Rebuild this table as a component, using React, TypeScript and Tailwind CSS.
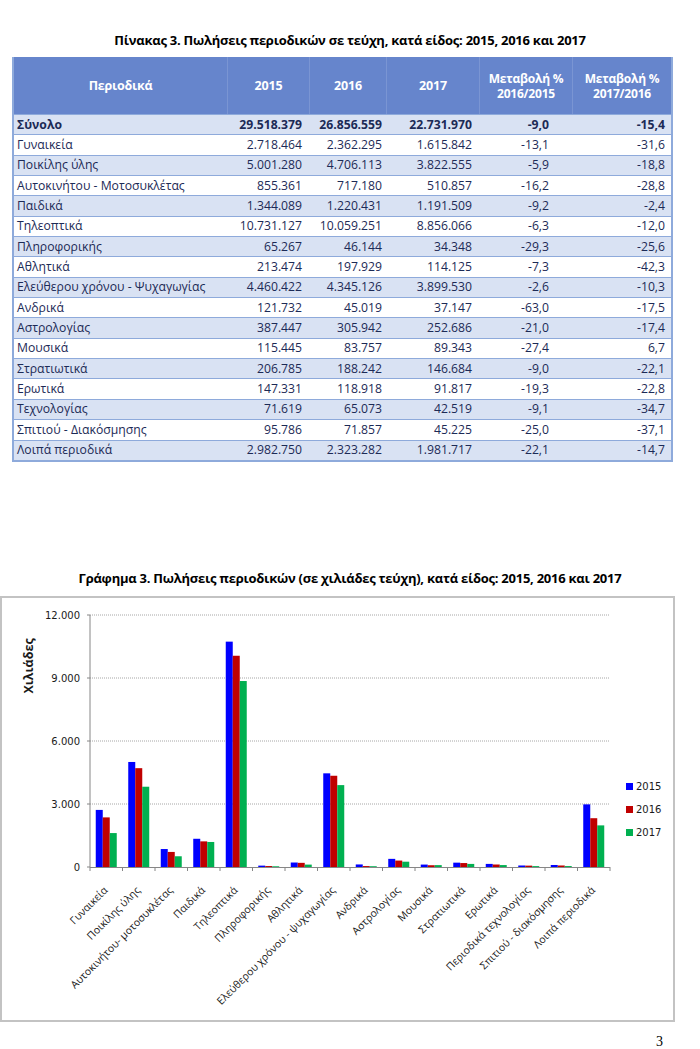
import React from "react";

const rows: [string, string, string, string, string, string][] = [
  ["Σύνολο", "29.518.379", "26.856.559", "22.731.970", "-9,0", "-15,4"],
  ["Γυναικεία", "2.718.464", "2.362.295", "1.615.842", "-13,1", "-31,6"],
  ["Ποικίλης ύλης", "5.001.280", "4.706.113", "3.822.555", "-5,9", "-18,8"],
  ["Αυτοκινήτου - Μοτοσυκλέτας", "855.361", "717.180", "510.857", "-16,2", "-28,8"],
  ["Παιδικά", "1.344.089", "1.220.431", "1.191.509", "-9,2", "-2,4"],
  ["Τηλεοπτικά", "10.731.127", "10.059.251", "8.856.066", "-6,3", "-12,0"],
  ["Πληροφορικής", "65.267", "46.144", "34.348", "-29,3", "-25,6"],
  ["Αθλητικά", "213.474", "197.929", "114.125", "-7,3", "-42,3"],
  ["Ελεύθερου χρόνου - Ψυχαγωγίας", "4.460.422", "4.345.126", "3.899.530", "-2,6", "-10,3"],
  ["Ανδρικά", "121.732", "45.019", "37.147", "-63,0", "-17,5"],
  ["Αστρολογίας", "387.447", "305.942", "252.686", "-21,0", "-17,4"],
  ["Μουσικά", "115.445", "83.757", "89.343", "-27,4", "6,7"],
  ["Στρατιωτικά", "206.785", "188.242", "146.684", "-9,0", "-22,1"],
  ["Ερωτικά", "147.331", "118.918", "91.817", "-19,3", "-22,8"],
  ["Τεχνολογίας", "71.619", "65.073", "42.519", "-9,1", "-34,7"],
  ["Σπιτιού - Διακόσμησης", "95.786", "71.857", "45.225", "-25,0", "-37,1"],
  ["Λοιπά περιοδικά", "2.982.750", "2.323.282", "1.981.717", "-22,1", "-14,7"],
];

const chartLabels = [
  "Γυναικεία",
  "Ποικίλης ύλης",
  "Αυτοκινήτου- μοτοσυκλέτας",
  "Παιδικά",
  "Τηλεοπτικά",
  "Πληροφορικής",
  "Αθλητικά",
  "Ελεύθερου χρόνου - ψυχαγωγίας",
  "Ανδρικά",
  "Αστρολογίας",
  "Μουσικά",
  "Στρατιωτικά",
  "Ερωτικά",
  "Περιοδικά τεχνολογίας",
  "Σπιτιού - διακόσμησης",
  "Λοιπά περιοδικά",
];

const num = (s: string) => parseInt(s.replace(/\./g, ""), 10) / 1000;

const FONT = "'Open Sans', 'Noto Sans', sans-serif";

function Table() {
  return (
    <div className="mx-[12px] w-[661px] border-x-2 border-b-2 border-[#8eaadb] text-[#1c2a56]">
      <div className="grid h-[57px] grid-cols-[214px_82px_77px_93px_93px_98px] bg-[#6685cc] text-[12.5px] font-bold leading-[15px] tracking-[-0.2px] text-white">
        <div className="flex items-center justify-center border-r border-[#7a95d3]">Περιοδικά</div>
        <div className="flex items-center justify-center border-r border-[#7a95d3]">2015</div>
        <div className="flex items-center justify-center border-r border-[#7a95d3]">2016</div>
        <div className="flex items-center justify-center border-r border-[#7a95d3]">2017</div>
        <div className="flex flex-col items-center justify-center border-r border-[#7a95d3] text-center text-[12px]">
          <span>Μεταβολή %</span>
          <span>2016/2015</span>
        </div>
        <div className="flex flex-col items-center justify-center text-center text-[12px]">
          <span>Μεταβολή %</span>
          <span>2017/2016</span>
        </div>
      </div>
      {rows.map((r, i) => (
        <div
          key={r[0]}
          className={`grid h-[20.35px] grid-cols-[214px_82px_77px_93px_93px_98px] items-center border-t border-[#8eaadb] text-[12.2px] leading-[18px] ${
            i % 2 === 0 ? "bg-[#d9e2f3]" : "bg-white"
          } ${i === 0 ? "font-bold" : ""}`}
        >
          <div className="pl-[3px]">{r[0]}</div>
          <div className="pr-[8px] text-right">{r[1]}</div>
          <div className="pr-[5px] text-right">{r[2]}</div>
          <div className="pr-[8px] text-right">{r[3]}</div>
          <div className="pr-[24px] text-right">{r[4]}</div>
          <div className="pr-[6px] text-right">{r[5]}</div>
        </div>
      ))}
    </div>
  );
}

function Chart() {
  const x0 = 90;
  const x1 = 610;
  const y0 = 866;
  const yTop = 614;
  const cw = (x1 - x0) / 16;
  const scale = (y0 - yTop) / 12000;
  const data = rows.slice(1).map((r) => [num(r[1]), num(r[2]), num(r[3])]);
  const colors = ["#0000ff", "#c00000", "#00b050"];
  const grid = [3000, 6000, 9000, 12000];
  return (
    <svg width="671" height="422" className="block">
      <g transform="translate(-2,-597)">
        {grid.map((g) => (
          <line
            key={g}
            x1={x0}
            x2={x1}
            y1={y0 - g * scale}
            y2={y0 - g * scale}
            stroke="#a6a6a6"
            strokeWidth="1"
            strokeDasharray="1 1"
          />
        ))}
        {[0, ...grid].map((g) => (
          <text
            key={"t" + g}
            x={80}
            y={y0 - g * scale + 4}
            textAnchor="end"
            fontFamily="'DejaVu Sans', sans-serif"
            fontSize="10"
            fill="#1a1a1a"
          >
            {g === 0 ? "0" : g.toLocaleString("de-DE")}
          </text>
        ))}
        {[0, ...grid].map((g) => (
          <line key={"yt" + g} x1={x0 - 3} x2={x0} y1={y0 - g * scale} y2={y0 - g * scale} stroke="#868686" />
        ))}
        <line x1={x0} x2={x0} y1={yTop} y2={y0} stroke="#868686" />
        {data.map((vals, i) =>
          vals.map((v, j) => {
            const h = v * scale;
            return (
              <rect
                key={i + "-" + j}
                x={x0 + i * cw + 5.75 + j * 7}
                y={y0 - h}
                width={7}
                height={h}
                fill={colors[j]}
              />
            );
          })
        )}
        <line x1={x0} x2={x1} y1={y0 + 0.5} y2={y0 + 0.5} stroke="#868686" />
        {Array.from({ length: 17 }).map((_, i) => (
          <line key={"xt" + i} x1={x0 + i * cw} x2={x0 + i * cw} y1={y0} y2={y0 + 4} stroke="#868686" />
        ))}
        {chartLabels.map((l, i) => {
          const cx = x0 + (i + 0.5) * cw;
          return (
            <text
              key={l}
              transform={`translate(${cx + 2},${890}) rotate(-45)`}
              textAnchor="end"
              fontFamily={FONT}
              fontSize="10.5"
              fill="#1a1a1a"
            >
              {l}
            </text>
          );
        })}
        <text
          transform="translate(33,665) rotate(-90)"
          textAnchor="middle"
          fontFamily={FONT}
          fontSize="12.5"
          fontWeight="bold"
          fill="#1a1a1a"
        >
          Χιλιάδες
        </text>
        {["2015", "2016", "2017"].map((t, j) => (
          <g key={t}>
            <rect x={626} y={782 + j * 23} width={7} height={7} fill={colors[j]} />
            <text
              x={636}
              y={789 + j * 23}
              fontFamily="'DejaVu Sans', sans-serif"
              fontSize="10"
              fill="#1a1a1a"
            >
              {t}
            </text>
          </g>
        ))}
      </g>
    </svg>
  );
}

export default function App() {
  return (
    <div className="relative h-[1049px] w-[700px] overflow-hidden bg-white" style={{ fontFamily: FONT }}>
      <div className="pt-[30px] text-center text-[13px] font-bold leading-[20px] tracking-[-0.25px] text-black">
        Πίνακας 3. Πωλήσεις περιοδικών σε τεύχη, κατά είδος: 2015, 2016 και 2017
      </div>
      <div className="mt-[7px]">
        <Table />
      </div>
      <div className="mt-[106px] text-center text-[13px] font-bold leading-[20px] tracking-[-0.25px] text-black">
        Γράφημα 3. Πωλήσεις περιοδικών (σε χιλιάδες τεύχη), κατά είδος: 2015, 2016 και 2017
      </div>
      <div className="mt-[8px] h-[426px] w-[675px] border-2 border-[#c3c3c3]">
        <Chart />
      </div>
      <div className="flex justify-end pr-[37px] pt-[12px]">
        <span className="text-[14px] leading-[16px] text-black" style={{ fontFamily: "'Liberation Serif', serif" }}>
          3
        </span>
      </div>
    </div>
  );
}
